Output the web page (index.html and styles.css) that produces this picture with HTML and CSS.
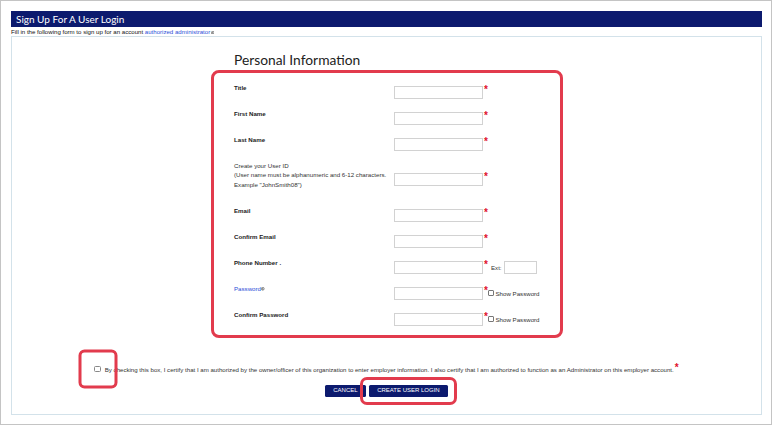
FILE: index.html
```html
<!DOCTYPE html>
<html lang="en">
<head>
    <meta charset="UTF-8">
    <meta name="viewport" content="width=device-width, initial-scale=1.0">
    <title>Sign Up For A User Login</title>
    <link rel="stylesheet" href="styles.css">
</head>
<body>
    <div class="screen">
        <div class="page-header">Sign Up For A User Login</div>
        <p class="intro">Fill in the following form to sign up for an account <a href="#">authorized administrator</a><svg class="help" viewBox="0 0 4 4"><circle cx="2" cy="2" r="1.6" fill="none" stroke="#444" stroke-width="0.7"/><rect x="1.6" y="1.2" width="0.8" height="1.8" fill="#444"/></svg></p>

        <div class="panel">
            <h2 class="section-title">Personal Information</h2>

            <div class="form-box">
                <div class="row">
                    <label>Title</label>
                    <div class="field"><input type="text"><span class="req">*</span></div>
                </div>
                <div class="row">
                    <label>First Name</label>
                    <div class="field"><input type="text"><span class="req">*</span></div>
                </div>
                <div class="row">
                    <label>Last Name</label>
                    <div class="field"><input type="text"><span class="req">*</span></div>
                </div>
                <div class="row row-userid">
                    <label class="plain">Create your User ID<br>(User name must be alphanumeric and 6-12 characters.<br>Example "JohnSmith08")</label>
                    <div class="field"><input type="text"><span class="req">*</span></div>
                </div>
                <div class="row">
                    <label>Email</label>
                    <div class="field"><input type="text"><span class="req">*</span></div>
                </div>
                <div class="row">
                    <label>Confirm Email</label>
                    <div class="field"><input type="text"><span class="req">*</span></div>
                </div>
                <div class="row">
                    <label>Phone Number .</label>
                    <div class="field">
                        <input type="text"><span class="req">*</span>
                        <span class="extra">Ext:<input type="text" class="ext"></span>
                    </div>
                </div>
                <div class="row">
                    <label class="link-label"><a href="#">Password</a><svg class="help" viewBox="0 0 4 4"><circle cx="2" cy="2" r="1.6" fill="none" stroke="#444" stroke-width="0.7"/><rect x="1.6" y="1.2" width="0.8" height="1.8" fill="#444"/></svg></label>
                    <div class="field">
                        <input type="password"><span class="req">*</span>
                        <span class="extra extra-tight"><span class="tick"></span>Show Password</span>
                    </div>
                </div>
                <div class="row">
                    <label>Confirm Password</label>
                    <div class="field">
                        <input type="password"><span class="req">*</span>
                        <span class="extra extra-tight"><span class="tick"></span>Show Password</span>
                    </div>
                </div>
            </div>

            <div class="agree">
                <span class="agree-box"></span>
                <span class="agree-text">By checking this box, I certify that I am authorized by the owner/officer of this organization to enter employer information. I also certify that I am authorized to function as an Administrator on this employer account.</span><span class="req">*</span>
            </div>

            <div class="actions">
                <button class="btn">CANCEL</button>
                <button class="btn btn-create">CREATE USER LOGIN</button>
            </div>
        </div>
    </div>
</body>
</html>
```

FILE: styles.css
```css
* {
    margin: 0;
    padding: 0;
    box-sizing: border-box;
}
body {
    background: #fff;
    font-family: "Liberation Sans", Arial, sans-serif;
    color: #222;
}
.screen {
    width: 772px;
    height: 425px;
    border: 1px solid #c4c4c4;
    padding: 10px 9px 0 10px;
}
.page-header {
    height: 16px;
    background: #0c1a6e;
    color: #fff;
    font-family: Lato, "Open Sans", sans-serif;
    font-size: 10px;
    line-height: 16px;
    padding-left: 5px;
}
.intro {
    font-size: 6.1px;
    line-height: 9px;
    color: #111;
}
.intro a, .link-label a {
    color: #2d4fd8;
    text-decoration: none;
}
.help {
    width: 3.5px;
    height: 3.5px;
    margin-left: 0.5px;
}
.panel {
    height: 379px;
    border: 1px solid #d3e2ea;
}
.section-title {
    font-family: Lato, "Open Sans", sans-serif;
    font-weight: normal;
    font-size: 13.8px;
    line-height: 16px;
    color: #222;
    margin: 15px 0 2px 222px;
}
.form-box {
    width: 352px;
    height: 268px;
    margin-left: 199px;
    border: 3px solid #e23b4d;
    border-radius: 8px;
    padding: 13px 0 0 20px;
}
.row {
    display: grid;
    grid-template-columns: 160px auto;
    height: 26px;
}
.row-userid {
    height: 44.5px;
}
.row-userid .field {
    margin-top: 8.5px;
}
.row label {
    font-size: 6.15px;
    font-weight: bold;
    line-height: 9.3px;
    margin-top: -3px;
    color: #222;
}
.row label.plain {
    font-weight: normal;
    color: #333;
}
.row label.link-label {
    font-weight: normal;
}
.field {
    display: flex;
    align-items: flex-start;
    height: 13px;
}
.field input {
    width: 89px;
    height: 13px;
    border: 1px solid #d2d2d2;
    outline: none;
}
.req {
    color: #e0112b;
    font-size: 10px;
    font-weight: bold;
    line-height: 7px;
    width: 5px;
    padding-left: 1px;
}
.extra {
    display: flex;
    align-items: center;
    height: 13px;
    font-size: 6.15px;
    color: #333;
    margin-left: 3px;
}
.extra-tight {
    margin-left: 0;
}
.field input.ext {
    width: 33px;
    margin-left: 2px;
}
.tick {
    width: 5.5px;
    height: 5.5px;
    border: 1px solid #777;
    border-radius: 1px;
    margin-right: 2px;
}
.agree {
    display: flex;
    justify-content: center;
    align-items: center;
    margin-top: 26px;
    height: 10px;
    font-size: 6.1px;
    color: #333;
}
.agree-box {
    position: relative;
    width: 7px;
    height: 6.5px;
    border: 1px solid #888;
    border-radius: 1.5px;
    margin-right: 3.5px;
}
.agree-box::after {
    content: "";
    position: absolute;
    left: 50%;
    top: 50%;
    width: 33px;
    height: 33px;
    transform: translate(-50%, -50%);
    border: 3px solid #e23b4d;
    border-radius: 6px;
}
.agree .req {
    align-self: flex-start;
    margin-top: 0;
}
.actions {
    display: flex;
    justify-content: center;
    gap: 3.5px;
    margin-top: 11px;
}
.btn {
    height: 11.5px;
    padding: 0 8px;
    border: none;
    border-radius: 1.5px;
    background: #0c1a6e;
    color: #fff;
    font-family: "Liberation Sans", Arial, sans-serif;
    font-size: 6px;
    line-height: 11.5px;
}
.btn-create {
    position: relative;
}
.btn-create::after {
    content: "";
    position: absolute;
    top: -8.5px;
    bottom: -8.5px;
    left: -9px;
    right: -9px;
    border: 3px solid #e23b4d;
    border-radius: 7px;
}
```
